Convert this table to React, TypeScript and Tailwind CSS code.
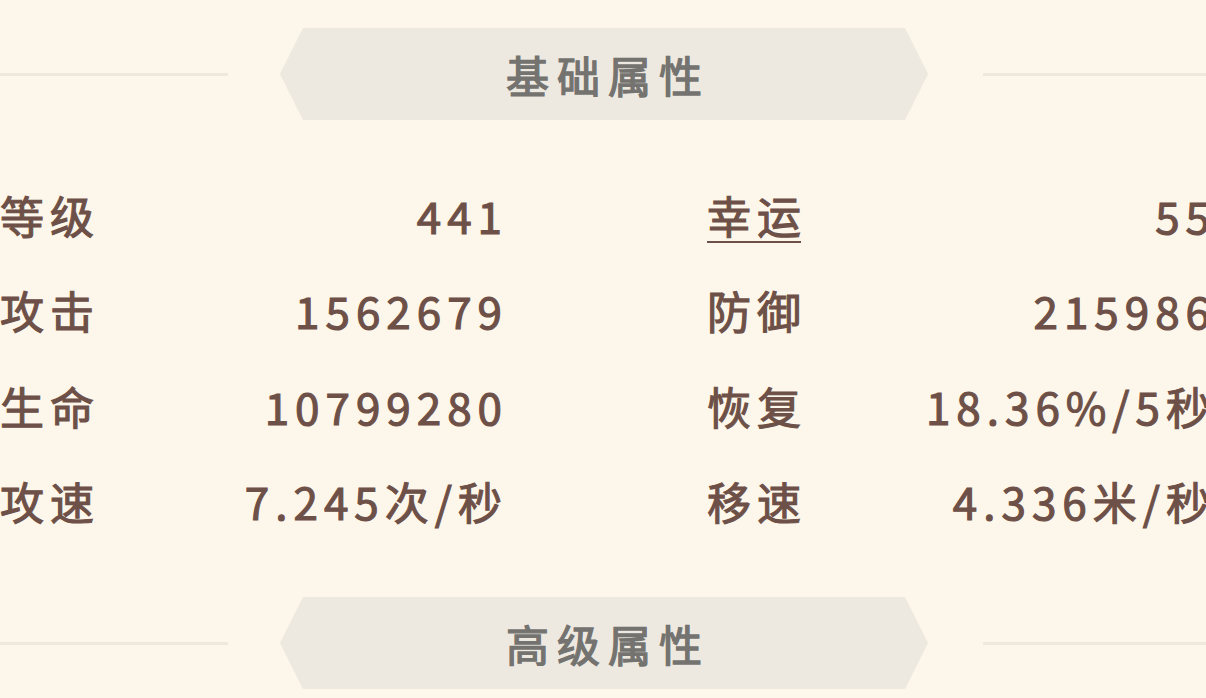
import React from "react";

const rows: [string, string, string, string][] = [
  ["等级", "441", "幸运", "55"],
  ["攻击", "1562679", "防御", "215986"],
  ["生命", "10799280", "恢复", "18.36%/5秒"],
  ["攻速", "7.245次/秒", "移速", "4.336米/秒"],
];

function SectionHeader({ title }: { title: string }) {
  return (
    <div className="flex h-[92px] items-center">
      <div className="h-[3px] w-[228px] bg-[#efe8dc]" />
      <div className="ml-[52px] flex h-full w-[648px] items-center justify-center bg-[#ede9e0] [clip-path:polygon(23px_0,calc(100%-23px)_0,100%_50%,calc(100%-23px)_100%,23px_100%,0_50%)]">
        <span className="-mr-[8px] text-[43px] leading-none tracking-[8px] text-[#747370] [-webkit-text-stroke:1.3px_#747370]">
          {title}
        </span>
      </div>
      <div className="ml-[55px] h-[3px] flex-1 bg-[#efe8dc]" />
    </div>
  );
}

function Stat({ label, value, underline }: { label: string; value: string; underline?: boolean }) {
  return (
    <div className="flex h-[95.5px] items-center justify-between">
      {underline ? (
        <span className="underline decoration-[2px] underline-offset-[7px]">
          {label.slice(0, -1)}
          <span className="tracking-normal">{label.slice(-1)}</span>
        </span>
      ) : (
        <span>{label}</span>
      )}
      <span className="-mr-[6px] tracking-[6px]">{value}</span>
    </div>
  );
}

export default function App() {
  return (
    <div
      className="flex h-[698px] w-[1206px] flex-col overflow-hidden bg-[#fdf6ea] pt-[28px]"
      style={{ fontFamily: '"Noto Sans CJK SC", "Noto Sans", sans-serif' }}
    >
      <SectionHeader title="基础属性" />

      <div className="mt-[47px] grid w-[1210px] grid-cols-[502px_503px] gap-x-[205px] text-[44px] leading-none tracking-[6px] text-[#6d5047] [-webkit-text-stroke:1.1px_#6d5047]">
        {rows.map(([l1, v1, l2, v2], i) => (
          <React.Fragment key={i}>
            <Stat label={l1} value={v1} />
            <Stat label={l2} value={v2} underline={i === 0} />
          </React.Fragment>
        ))}
      </div>

      <div className="mt-[48px]">
        <SectionHeader title="高级属性" />
      </div>
    </div>
  );
}
